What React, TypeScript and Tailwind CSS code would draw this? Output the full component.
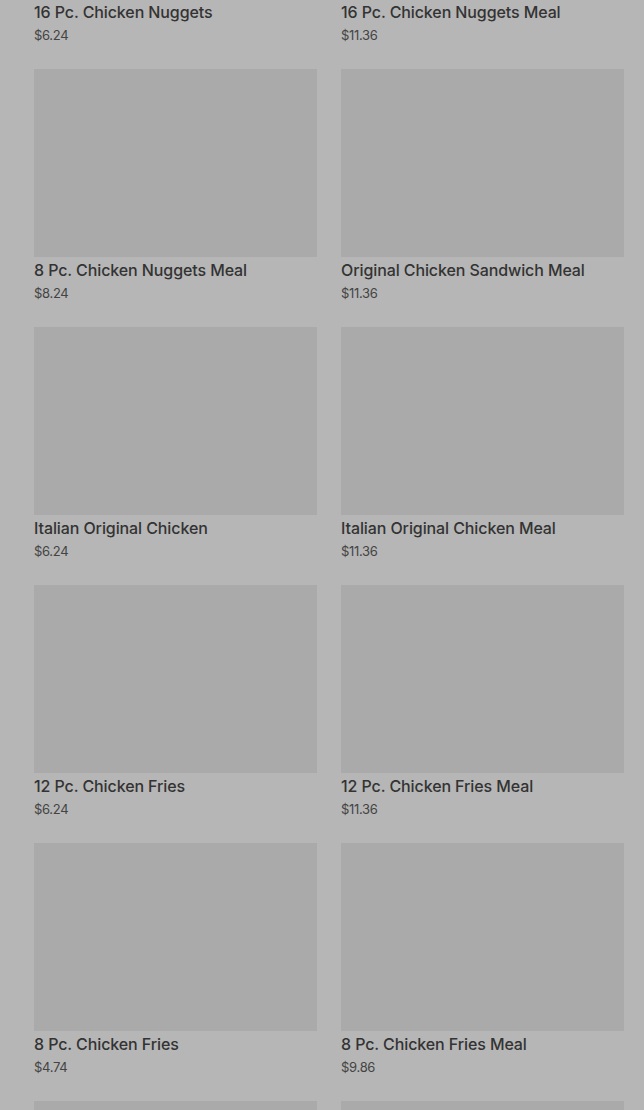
const items = [
  ["16 Pc. Chicken Nuggets", "$6.24"],
  ["16 Pc. Chicken Nuggets Meal", "$11.36"],
  ["8 Pc. Chicken Nuggets Meal", "$8.24"],
  ["Original Chicken Sandwich Meal", "$11.36"],
  ["Italian Original Chicken", "$6.24"],
  ["Italian Original Chicken Meal", "$11.36"],
  ["12 Pc. Chicken Fries", "$6.24"],
  ["12 Pc. Chicken Fries Meal", "$11.36"],
  ["8 Pc. Chicken Fries", "$4.74"],
  ["8 Pc. Chicken Fries Meal", "$9.86"],
  ["", ""],
  ["", ""],
];

export default function App() {
  return (
    <div
      className="w-[644px] h-[1110px] overflow-hidden bg-[#b6b6b6]"
      style={{ fontFamily: "Inter, 'Noto Sans', sans-serif" }}
    >
      <div className="grid grid-cols-2 gap-x-6 pl-[34px] pr-[20px] mt-[-189px]">
        {items.map(([name, price], i) => (
          <div key={i} className="flex flex-col pb-6">
            <div className="h-[188px] bg-[#aaaaaa]" />
            <div className="mt-[1px] text-[16px] leading-6 font-medium tracking-[-0.1px] text-[#333333]">{name}</div>
            <div className="mt-[1px] text-[13px] leading-5 text-[#444444] tracking-[-0.3px]">{price}</div>
          </div>
        ))}
      </div>
    </div>
  );
}
